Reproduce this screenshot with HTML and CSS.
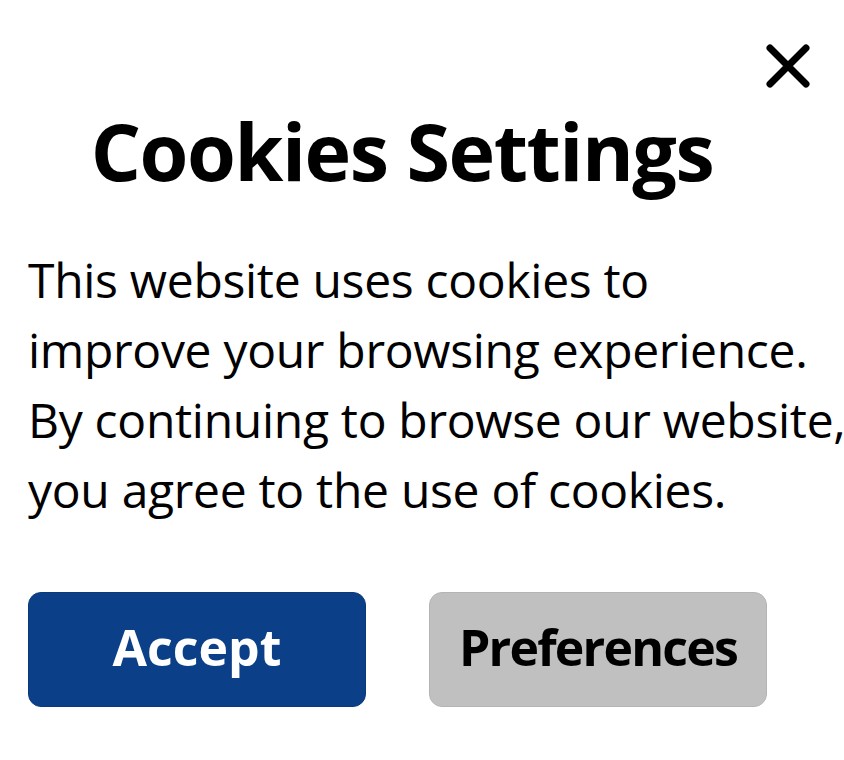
FILE: index.html
```html
<!DOCTYPE html>
<html lang="en">
<head>
<meta charset="utf-8">
<title>Cookies Settings</title>
<link rel="stylesheet" href="styles.css">
</head>
<body>
<div class="dialog">
  <button class="close" aria-label="Close">
    <svg width="44" height="44" viewBox="0 0 44 44"><path d="M4 4 L40 40 M40 4 L4 40" stroke="#000" stroke-width="7" stroke-linecap="round" fill="none"/></svg>
  </button>
  <h1 class="title">Cookies Settings</h1>
  <p class="text">This website uses cookies to<br>improve your browsing experience.<br>By continuing to browse our website,<br>you agree to the use of cookies.</p>
  <div class="actions">
    <button class="btn btn-primary">Accept</button>
    <button class="btn btn-secondary">Preferences</button>
  </div>
</div>
</body>
</html>
```

FILE: styles.css
```css
html, body {
  margin: 0;
  padding: 0;
  background: #ffffff;
}
body {
  font-family: "Open Sans", "Noto Sans", sans-serif;
  color: #000;
  width: 844px;
  height: 760px;
  overflow: hidden;
}
.dialog {
  position: relative;
  width: 748px;
  padding: 101px 0 0 28px;
}
.close {
  position: absolute;
  left: 766px;
  top: 44px;
  width: 44px;
  height: 44px;
  padding: 0;
  border: 0;
  background: transparent;
}
.close svg { display: block; }
.title {
  margin: 0;
  font-size: 79px;
  font-weight: 700;
  line-height: 100px;
  letter-spacing: -1.5px;
  text-align: center;
}
.text {
  margin: 44px 0 0 0;
  font-size: 48px;
  line-height: 70px;
  font-weight: 400;
  letter-spacing: -0.3px;
  white-space: nowrap;
}
.actions {
  display: flex;
  gap: 63px;
  margin-top: 67px;
}
.btn {
  width: 338px;
  height: 115px;
  border-radius: 13px;
  font-family: "Open Sans", "Noto Sans", sans-serif;
  font-weight: 700;
  font-size: 50px;
  line-height: 1;
  padding: 0 0 6px 0;
  display: flex;
  align-items: center;
  justify-content: center;
  cursor: pointer;
}
.btn-primary {
  background: #0b4089;
  color: #fff;
  border: 1px solid #0a3a7c;
}
.btn-secondary {
  background: #c0c0c0;
  color: #000;
  border: 1px solid #b4b4b4;
  letter-spacing: -1.8px;
}
```
